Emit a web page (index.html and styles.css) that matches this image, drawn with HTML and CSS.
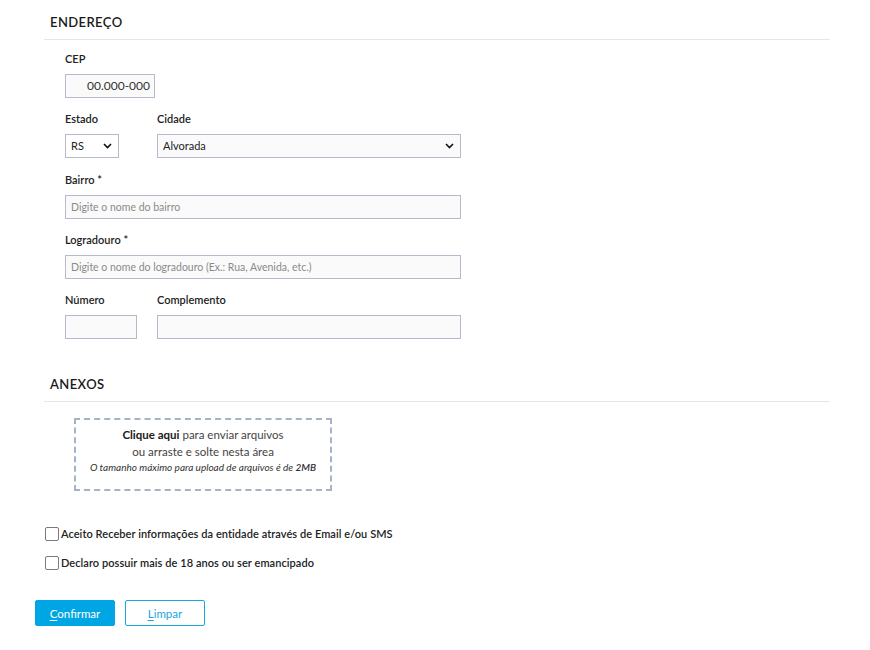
FILE: index.html
```html
<!DOCTYPE html>
<html lang="pt-BR">
<head>
<meta charset="utf-8">
<title>Endereço</title>
<link rel="stylesheet" href="styles.css">
</head>
<body>
<div class="page">
  <section class="section">
    <h2 class="section-title">ENDEREÇO</h2>
    <div class="fields">
      <div class="field">
        <label class="label">CEP</label>
        <div class="input input-cep">00.000-000</div>
      </div>
      <div class="row">
        <div class="field col-first">
          <label class="label">Estado</label>
          <div class="select select-uf"><span>RS</span>
            <svg class="chev" width="9" height="6" viewBox="0 0 9 6"><path d="M1 1l3.5 3.5L8 1" fill="none" stroke="#111" stroke-width="1.6"/></svg>
          </div>
        </div>
        <div class="field col-rest">
          <label class="label">Cidade</label>
          <div class="select select-city"><span>Alvorada</span>
            <svg class="chev" width="9" height="6" viewBox="0 0 9 6"><path d="M1 1l3.5 3.5L8 1" fill="none" stroke="#111" stroke-width="1.6"/></svg>
          </div>
        </div>
      </div>
      <div class="field">
        <label class="label">Bairro *</label>
        <div class="input input-full placeholder">Digite o nome do bairro</div>
      </div>
      <div class="field">
        <label class="label">Logradouro *</label>
        <div class="input input-full placeholder">Digite o nome do logradouro (Ex.: Rua, Avenida, etc.)</div>
      </div>
      <div class="row">
        <div class="field col-first">
          <label class="label">Número</label>
          <div class="input input-num"></div>
        </div>
        <div class="field col-rest">
          <label class="label">Complemento</label>
          <div class="input input-comp"></div>
        </div>
      </div>
    </div>
  </section>

  <section class="section section-anexos">
    <h2 class="section-title">ANEXOS</h2>
    <div class="dropzone">
      <div class="dz-line"><strong>Clique aqui</strong> para enviar arquivos</div>
      <div class="dz-line">ou arraste e solte nesta área</div>
      <div class="dz-note">O tamanho máximo para upload de arquivos é de <b>2MB</b></div>
    </div>
  </section>

  <div class="checks">
    <label class="check"><span class="box"></span><span>Aceito Receber informações da entidade através de Email e/ou SMS</span></label>
    <label class="check"><span class="box"></span><span>Declaro possuir mais de 18 anos ou ser emancipado</span></label>
  </div>

  <div class="buttons">
    <button class="btn btn-primary"><u>C</u>onfirmar</button>
    <button class="btn btn-outline"><u>L</u>impar</button>
  </div>
</div>
</body>
</html>
```

FILE: styles.css
```css
* { box-sizing: border-box; }
html, body { margin: 0; padding: 0; background: #fff; }
body {
  font-family: Lato, "Open Sans", "DejaVu Sans", sans-serif;
  color: #222;
  font-size: 11px;
}
.page { width: 870px; }

.section { margin-left: 44px; width: 786px; }
.section-title {
  margin: 0;
  font-size: 13px;
  font-weight: 600;
  line-height: 16px;
  padding: 14px 0 9px 6px;
  border-bottom: 1px solid #e6e6e6;
  color: #1a1a1a;
  letter-spacing: 0.4px;
}
.section-anexos { margin-top: 9px; }

.fields { padding: 12px 0 0 21px; }
.row { display: flex; }
.col-first { width: 92px; }
.field { margin-bottom: 14px; display: flex; flex-direction: column; align-items: flex-start; }
.field:nth-child(3) { margin-top: 1px; }
.label {
  display: block;
  font-size: 11px;
  line-height: 14px;
  font-weight: 600;
  color: #222;
  margin-bottom: 8px;
}
.input, .select {
  height: 24px;
  border: 1px solid #b9b9cc;
  background: #fafafa;
  font-size: 11px;
  line-height: 22px;
  padding: 0 5px;
  color: #222;
}
.input-cep { width: 90px; text-align: right; padding-right: 4px; font-size: 12px; color: #333; }
.input-full { width: 396px; }
.input-num { width: 72px; }
.input-comp { width: 304px; }
.placeholder { color: #8a8a8a; font-size: 10.5px; }
.select { display: flex; align-items: center; justify-content: space-between; padding: 0 6px 0 5px; }
.select-uf { width: 54px; background: #fff; }
.select-city { width: 304px; }
.chev { display: block; }

.dropzone {
  margin: 16px 0 0 30px;
  width: 258px;
  height: 73px;
  border: 2px dashed #a5b3c6;
  padding-top: 6px;
  text-align: center;
}
.dz-line { font-size: 11.5px; line-height: 17px; color: #444; }
.dz-line strong { color: #1a1a1a; font-weight: 700; }
.dz-note { font-size: 10px; line-height: 14px; font-style: italic; color: #333; }
.dz-note b { font-weight: 600; }

.checks { margin: 36px 0 0 45px; display: flex; flex-direction: column; gap: 15px; }
.check { display: flex; align-items: center; gap: 2px; font-size: 11px; font-weight: 600; color: #222; line-height: 14px; letter-spacing: 0.06px; }
.box {
  width: 14px; height: 14px;
  border: 1.5px solid #7a7a85;
  border-radius: 2px;
  background: #fff;
  flex: none;
}

.buttons { margin: 30px 0 0 35px; display: flex; gap: 10px; }
.btn {
  width: 80px;
  height: 26px;
  font-family: inherit;
  font-size: 11.5px;
  border-radius: 2px;
  cursor: pointer;
  padding: 0;
}
.btn u { text-underline-offset: 2px; }
.btn-primary { background: #00a6e3; border: 1px solid #00a6e3; color: #fff; }
.btn-outline { background: #fff; border: 1px solid #19a7e0; color: #19a7e0; }
```
